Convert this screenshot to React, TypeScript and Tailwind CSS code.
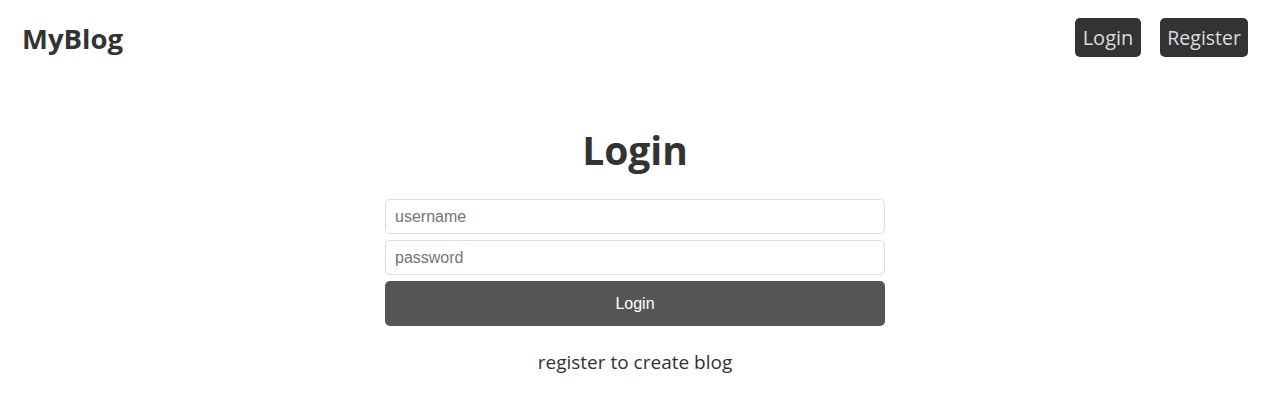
export default function App() {
  return (
    <div className="min-h-[410px] bg-white font-['Open_Sans',sans-serif] text-[#333]">
      <div className="w-[1270px]">
        <header className="flex items-center justify-between px-[22px] pt-[18px]">
          <a className="pt-[3px] text-[27.5px] font-bold leading-none">MyBlog</a>
          <nav className="flex gap-[19px]">
            <button className="h-[39px] rounded-[5px] bg-[#333] px-2 text-[20px] leading-none text-[#ddd]">
              Login
            </button>
            <button className="h-[39px] rounded-[5px] bg-[#333] px-[7px] text-[19.5px] leading-none text-[#ddd]">
              Register
            </button>
          </nav>
        </header>

        <main className="mx-auto mt-[73px] w-[500px]">
          <h1 className="text-center text-[39px] font-bold leading-none">Login</h1>
          <form className="mt-[30px] flex flex-col gap-[6px] font-['Liberation_Sans',Arial,sans-serif]">
            <input
              placeholder="username"
              className="h-[35px] rounded-[5px] border border-[#ddd] px-[9px] text-[16px] outline-none placeholder:text-[#757575]"
            />
            <input
              type="password"
              placeholder="password"
              className="h-[35px] rounded-[5px] border border-[#ddd] px-[9px] text-[16px] outline-none placeholder:text-[#757575]"
            />
            <button
              type="button"
              className="h-[45px] rounded-[5px] bg-[#555] text-[16px] text-white"
            >
              Login
            </button>
          </form>
          <p className="mt-[22px] text-center text-[19px]">register to create blog</p>
        </main>
      </div>
    </div>
  );
}
